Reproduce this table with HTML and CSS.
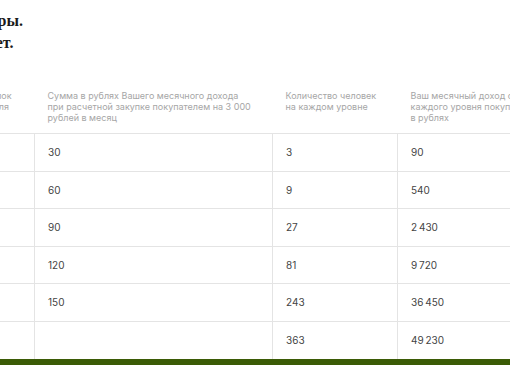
FILE: index.html
```html
<!DOCTYPE html>
<html lang="ru">
<head>
    <meta charset="UTF-8">
    <meta name="viewport" content="width=device-width, initial-scale=1.0">
    <title>Доход</title>
    <link rel="stylesheet" href="styles.css">
</head>
<body>
    <div class="page">
        <h2 class="title">Покупаете товары.<br>Ваш доход растет.</h2>

        <table class="income">
            <colgroup>
                <col class="c-level">
                <col class="c-sum">
                <col class="c-people">
                <col class="c-total">
            </colgroup>
            <thead>
                <tr>
                    <th>Номер блок<br>покупателя</th>
                    <th>Сумма в рублях Вашего месячного дохода<br>при расчетной закупке покупателем на 3&nbsp;000<br>рублей в месяц</th>
                    <th>Количество человек<br>на каждом уровне</th>
                    <th>Ваш месячный доход с<br>каждого уровня покупателей<br>в рублях</th>
                </tr>
            </thead>
            <tbody>
                <tr><td>1</td><td>30</td><td>3</td><td>90</td></tr>
                <tr><td>2</td><td>60</td><td>9</td><td>540</td></tr>
                <tr><td>3</td><td>90</td><td>27</td><td>2&thinsp;430</td></tr>
                <tr><td>4</td><td>120</td><td>81</td><td>9&thinsp;720</td></tr>
                <tr><td>5</td><td>150</td><td>243</td><td>36&thinsp;450</td></tr>
                <tr><td>Итого</td><td></td><td>363</td><td>49&thinsp;230</td></tr>
            </tbody>
        </table>
        <div class="bar"></div>
    </div>
</body>
</html>
```

FILE: styles.css
```css
body {
    margin: 0;
    overflow: hidden;
    background: #fff;
    font-family: "Inter", "Noto Sans", sans-serif;
}

.page {
    margin-left: -54px;
    width: 700px;
}

.title {
    margin: 10px 0 0 -61px;
    font-family: "Liberation Serif", serif;
    font-size: 16px;
    line-height: 22px;
    font-weight: bold;
    color: #1a1a1a;
}

.income {
    margin-top: 25px;
    border-collapse: collapse;
    table-layout: fixed;
    width: 651px;
}

.c-level { width: 88px; }
.c-sum { width: 238px; }
.c-people { width: 125px; }
.c-total { width: 200px; }

.income th {
    padding: 11px 13px 10px;
    text-align: left;
    vertical-align: top;
    font-weight: normal;
    font-size: 9px;
    line-height: 11px;
    color: #a6a6a6;
    white-space: nowrap;
}

.income th:first-child {
    padding-left: 12px;
}

.income td {
    padding: 12px 13px;
    font-size: 10px;
    line-height: 12.6px;
    color: #444;
    border-top: 1px solid #e4e4e4;
    border-left: 1px solid #e4e4e4;
}

.bar {
    height: 6px;
    background: #3b5b06;
}
```
